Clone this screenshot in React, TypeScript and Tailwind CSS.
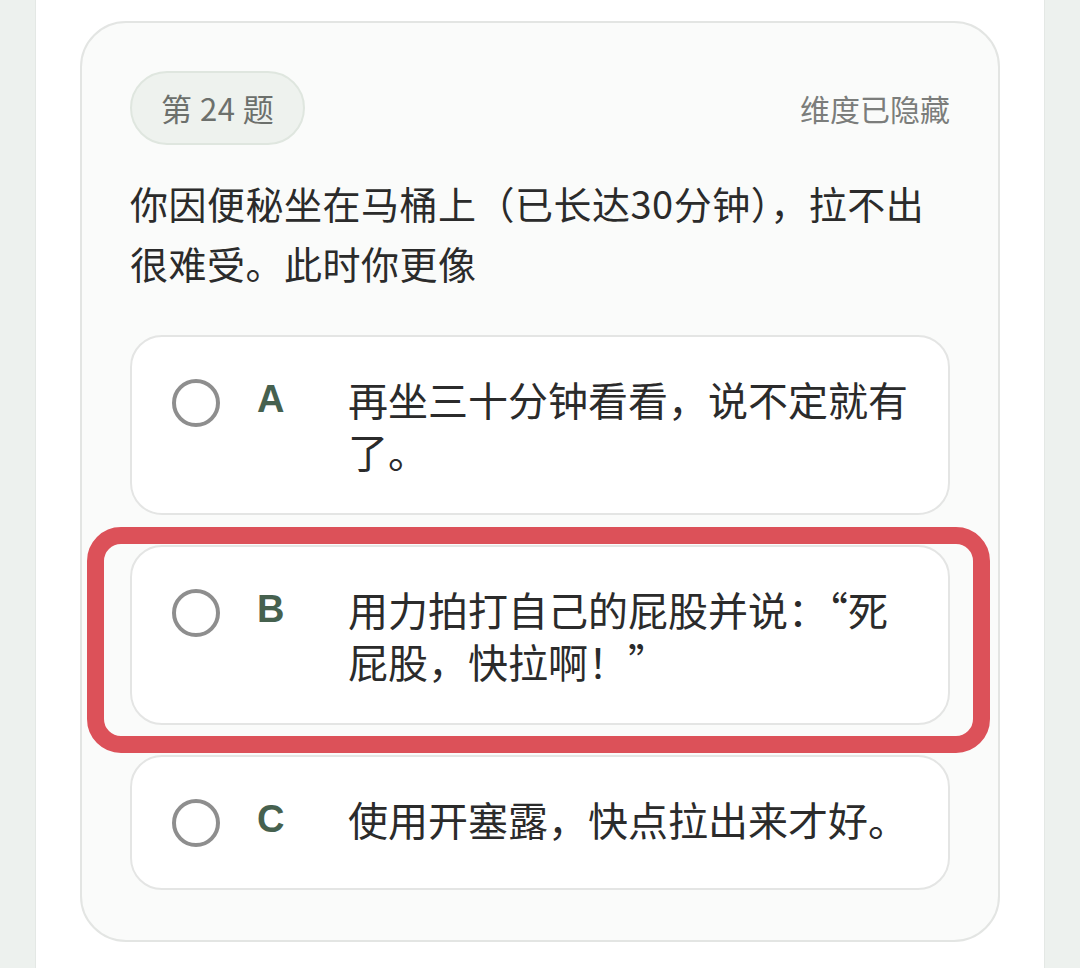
import { ReactNode } from 'react';

type Option = {
    key: string;
    text: string;
    marked?: boolean;
};

const options: Option[] = [
    { key: 'A', text: '再坐三十分钟看看，说不定就有了。' },
    { key: 'B', text: '用力拍打自己的屁股并说：“死屁股，快拉啊！”', marked: true },
    { key: 'C', text: '使用开塞露，快点拉出来才好。' },
];

// One answer row: radio circle, letter, text
function OptionRow({ option }: { option: Option }): ReactNode {
    return (
        <div className="relative rounded-[32px] border-2 border-[#e4e5e4] bg-white pl-[40px] pr-[30px] py-[36px]">
            <div className="flex items-start">
                <div className="flex h-[59px] w-12 shrink-0 items-center">
                    <div className="h-12 w-12 rounded-full border-4 border-[#8e8e8e]" />
                </div>
                <span className="ml-[37px] w-[91px] shrink-0 font-['Liberation_Sans',sans-serif] text-[38px] font-bold leading-[52px] text-[#46614f]">
                    {option.key}
                </span>
                <p className="flex-1 text-[40px] leading-[52px] text-[#2b2b2b]">{option.text}</p>
            </div>
            {option.marked && (
                <div className="pointer-events-none absolute -left-[45px] -right-[42px] -top-[20px] -bottom-[30px] rounded-[34px] border-[17px] border-[#dc5159]" />
            )}
        </div>
    );
}

export default function App() {
    return (
        <div className="flex min-h-[968px] justify-center bg-[#edf1ee] font-['Noto_Sans_CJK_SC',sans-serif]">
            <div className="w-[1010px] border-x border-[#e4e8e5] bg-white px-[44px] pt-[21px]">
                <div className="rounded-[46px] border-2 border-[#e3e5e3] bg-[#fafbfa] px-[48px] pt-[48px] pb-[50px]">
                    <div className="flex items-center justify-between">
                        <span className="flex h-[74px] items-center rounded-full border-2 border-[#dfe6df] bg-[#eef2ee] px-[29px] text-[31px] tracking-[0.5px] text-[#6c706c]">
                            第 24 题
                        </span>
                        <span className="text-[30px] text-[#7b7d7b]">维度已隐藏</span>
                    </div>
                    <p className="mt-[28px] text-[38px] leading-[60px] tracking-[0.5px] text-[#2b2b2b]">
                        你因便秘坐在马桶上（已长达30分钟），拉不出很难受。此时你更像
                    </p>
                    <div className="mt-[42px] flex flex-col gap-[30px]">
                        {options.map((o) => (
                            <OptionRow key={o.key} option={o} />
                        ))}
                    </div>
                </div>
            </div>
        </div>
    );
}
